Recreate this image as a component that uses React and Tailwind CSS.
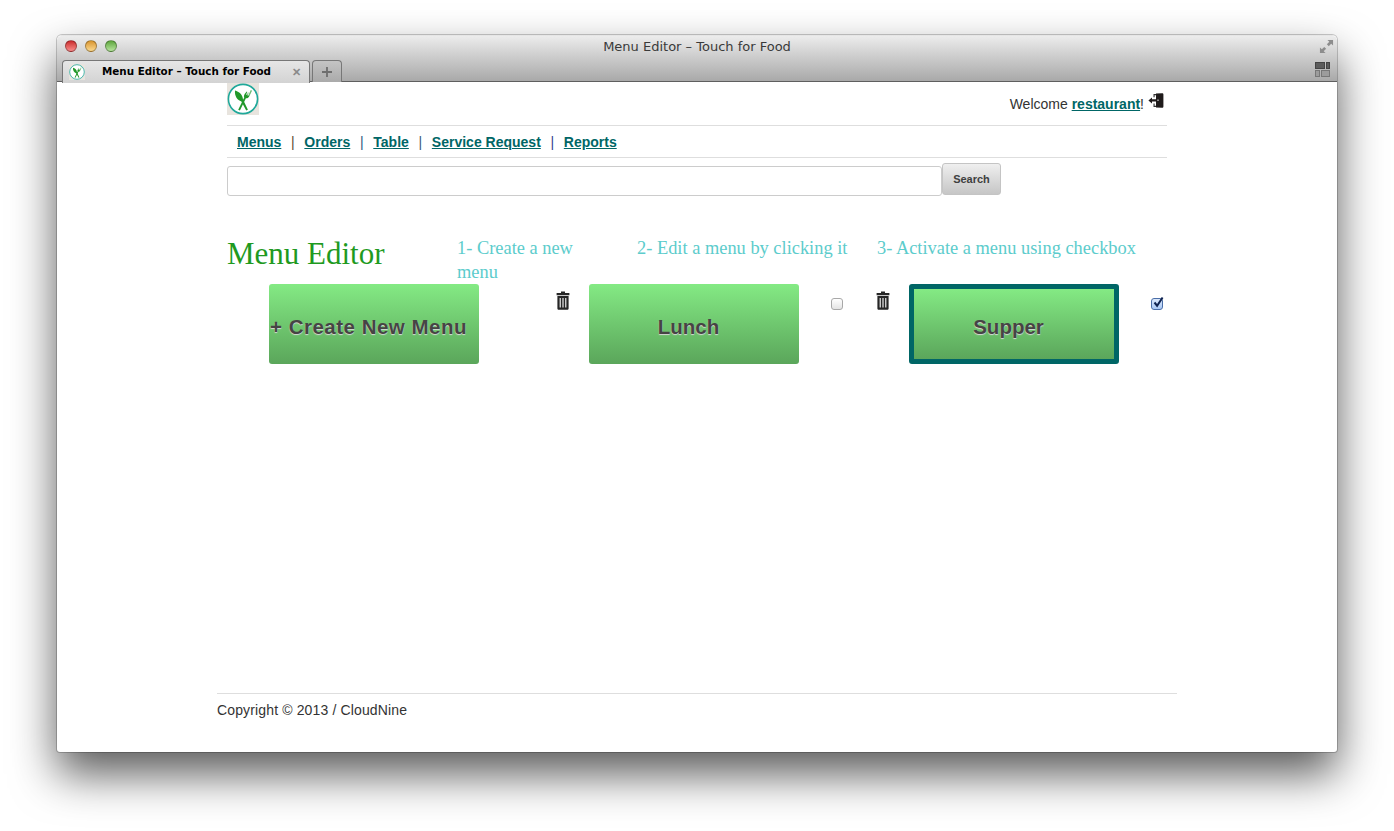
import React from "react";

const sans = { fontFamily: '"Liberation Sans", Arial, sans-serif' };

function Logo({ small }) {
  const s = small ? 16 : 32;
  return (
    <svg width={s} height={s} viewBox="0 0 32 32" className="block shrink-0">
      <rect width="32" height="32" fill="#e8e4de" />
      <circle cx="16" cy="16" r="14.6" fill="#fff" stroke="#1fa89a" strokeWidth="1.6" />
      <path d="M8 7.5 C12 8.5 15.8 11.5 16 16.5 L20.9 26.8 L19.2 27.6 L14.4 18.4 C10.4 17.4 7.4 13 8 7.5Z" fill="#22982a" />
      <path d="M23.8 7 L24.9 7.7 L22.4 13 C21.6 14.8 20.2 15.6 18.9 15.3 L12.9 27.6 L11.2 26.8 L17.2 14.6 C16.5 13.2 17.2 11.8 18 10.6 L19.8 8.6 L20.4 9 L19 11.4 L19.6 11.8 L21.2 9.4 L21.8 9.8 L20.5 12.3 L21.1 12.7Z" fill="#22982a" />
      <path d="M20 8.6 L23.8 7 L24.9 7.7 L22.4 13 L19.8 11.8Z" fill="#ffffff" opacity="0.35" />
    </svg>
  );
}

function Trash() {
  return (
    <svg width="14" height="19" viewBox="0 0 14 19" className="block">
      <path d="M5 0.5h4v1.4h4.4v2.4H0.6V1.9H5z" fill="#262626" />
      <path d="M1.4 5h11.2v12.4c0 .8-.6 1.3-1.3 1.3H2.7c-.7 0-1.3-.5-1.3-1.3z" fill="#262626" />
      <path d="M3.6 7h1.3v9.6H3.6zM6.35 7h1.3v9.6h-1.3zM9.1 7h1.3v9.6H9.1z" fill="#dcdcdc" />
    </svg>
  );
}

function Exit() {
  return (
    <svg width="16" height="15" viewBox="0 0 16 15" className="block">
      <path d="M5.5 1h2.5v1.2H6.6v2H5.5zM5.5 10.6h1.1v2.2H8V14H5.5z" fill="#333" />
      <path d="M8 0.4l6-0.2c1 0 1.4.5 1.4 1.4v11.8c0 .9-.4 1.4-1.4 1.4L8 14.6z" fill="#1f1b1b" />
      <path d="M0.4 7.4L4 4.4v1.9h4.6v2.3H4v1.9z" fill="#1f1b1b" />
      <rect x="9.4" y="6.6" width="1.2" height="1.2" fill="#fff" />
    </svg>
  );
}

function Light({ cls }) {
  return <span className={`block w-3 h-3 rounded-full border border-black/30 ${cls}`} />;
}

function MenuCard({ label, active, wide }) {
  return (
    <button
      className={`w-[210px] h-20 shrink-0 rounded-[3px] bg-gradient-to-b from-[#84ea84] to-[#5ba65b] pr-[11px] pt-[6px] text-[20.5px] font-bold whitespace-nowrap text-[#464444] [text-shadow:0_1px_1px_#d8d8d8] ${
        active ? "border-[5px] border-[#006666]" : ""
      } ${wide ? "tracking-[0.5px]" : ""}`}
      style={sans}
    >
      {label}
    </button>
  );
}

function Check({ on }) {
  return on ? (
    <span className="relative block w-3 h-3 rounded-[3px] border border-[#4a6ea8] bg-gradient-to-b from-[#dbe8fb] to-[#a9c8f5]">
      <svg width="13" height="13" viewBox="0 0 13 13" className="absolute -top-[3px] left-0">
        <path d="M2.5 6.5l2.6 3.2L10.6 1.5" fill="none" stroke="#0f2350" strokeWidth="2" />
      </svg>
    </span>
  ) : (
    <span className="block w-3 h-3 rounded-[3px] border border-[#a8a8a8] bg-gradient-to-b from-white to-[#e4e4e4]" />
  );
}

const Sep = ({ c }) => <span className={`mx-[9.7px] font-normal ${c}`}>|</span>;
const NavLink = ({ children }) => <a className="font-bold underline text-[#006666] cursor-pointer">{children}</a>;

export default function App() {
  return (
    <div className="w-[1394px] h-[831px] overflow-hidden bg-white pl-[57px] pt-[35px]" style={sans}>
      <div className="w-[1280px] h-[717px] flex flex-col bg-white rounded-t-[5px] rounded-b-[3px] shadow-[0_22px_45px_rgba(0,0,0,0.65),0_0_0_1px_rgba(0,0,0,0.2)]">
        {/* Window title bar */}
        <div className="relative h-[47px] shrink-0 rounded-t-[5px] bg-gradient-to-b from-[#ececec] to-[#a9a9a9] border-t border-white/70 border-b border-b-[#5f5f5f]">
          <div className="flex h-[23px] items-start">
            <div className="flex gap-2 pl-2 pt-[4px]">
              <Light cls="bg-gradient-to-b from-[#c9272c] to-[#f98a8a]" />
              <Light cls="bg-gradient-to-b from-[#d8952a] to-[#fbd98c]" />
              <Light cls="bg-gradient-to-b from-[#5da63b] to-[#b7e59d]" />
            </div>
            <div className="flex-1 text-center text-[13px] leading-5 pt-px text-[#3a3a3a] pr-[42px]" style={{ fontFamily: '"DejaVu Sans", sans-serif' }}>
              Menu Editor – Touch for Food
            </div>
            <svg width="15" height="15" viewBox="0 0 16 16" className="mr-[3px] mt-[3px]">
              <path d="M15 1v6l-2-2-2.6 2.6-2-2L11 3 9 1zM1 15V9l2 2 2.6-2.6 2 2L5 13l2 2z" fill="#8d8d8d" />
            </svg>
          </div>
          <div className="flex h-[23px] items-end pl-[5px]">
            <div className="w-[248px] h-[23px] flex items-center rounded-t-[4px] bg-gradient-to-b from-[#e6e6e6] to-[#d3d3d3] border-t border-x border-[#777] -mb-px relative">
              <span className="ml-[6px]"><Logo small /></span>
              <span className="ml-[17px] text-[10.35px] font-semibold text-black flex-1 whitespace-nowrap" style={{ fontFamily: '"DejaVu Sans", sans-serif' }}>
                Menu Editor – Touch for Food
              </span>
              <span className="mr-[8px] text-[11px] font-bold text-[#8a8a8a]">✕</span>
            </div>
            <div className="ml-[2px] w-[30px] h-[22px] flex items-center justify-center rounded-t-[4px] bg-gradient-to-b from-[#c4c4c4] to-[#aaaaaa] border-t border-x border-[#777]">
              <svg width="10" height="10" viewBox="0 0 11 11"><path d="M4.5 0h2v4.5H11v2H6.5V11h-2V6.5H0v-2h4.5z" fill="#6e6e6e" /></svg>
            </div>
            <div className="flex-1" />
            <div className="flex flex-col gap-px mr-[7px] mb-[5px] w-[15px]">
              <div className="flex gap-px">
                <span className="w-[10px] h-[7px] bg-[#5c5c5c] border border-[#444]" />
                <span className="w-[4px] h-[7px] bg-[#5c5c5c] border border-[#444]" />
              </div>
              <div className="flex gap-px">
                <span className="w-[5px] h-[7px] bg-[#9c9c9c] border border-[#777]" />
                <span className="w-[9px] h-[7px] bg-[#9c9c9c] border border-[#777]" />
              </div>
            </div>
          </div>
        </div>

        {/* Page */}
        <div className="flex-1 flex flex-col items-center text-[14px] text-[#333]">
          <main className="w-[940px] flex-1">
            <header className="h-[44px] flex items-start justify-between border-b border-[#dedede] pt-px">
              <Logo />
              <div className="flex items-start pt-[9px] pr-[3px]">
                <span className="pt-[2px] leading-5 mr-px">
                  Welcome <a className="font-bold underline text-[#006666]">restaurant</a>!
                </span>
                <span className="ml-[3px] mt-[1px]"><Exit /></span>
              </div>
            </header>
            <nav className="h-[32px] flex items-center border-b border-[#dedede] pl-[10px] pt-[2px] whitespace-nowrap">
              <NavLink>Menus</NavLink><Sep c="text-[#5a4a30]" />
              <NavLink>Orders</NavLink><Sep c="text-[#2f5a80]" />
              <NavLink>Table</NavLink><Sep c="text-[#405a78]" />
              <NavLink>Service Request</NavLink><Sep c="text-[#3a3f90]" />
              <NavLink>Reports</NavLink>
            </nav>
            <div className="flex items-start pt-[5px]">
              <input className="w-[715px] h-[30px] mt-[3px] rounded-[3px] border border-[#cccccc] bg-white" />
              <button className="w-[59px] h-[32px] rounded-[3px] border border-[#c4c4c4] bg-gradient-to-b from-[#efefef] to-[#c6c6c6] text-[11px] font-bold text-[#404040]">
                Search
              </button>
            </div>
            <section className="flex h-[88px] pt-[38px]" style={{ fontFamily: '"Liberation Serif", Georgia, serif' }}>
              <h1 className="w-[230px] text-[31px] leading-[36px] pt-[2px] text-[#1f9a1f]">Menu Editor</h1>
              <p className="w-[180px] text-[18.4px] leading-6 pt-[2px] pr-[50px] text-[#5ccccc]">1- Create a new menu</p>
              <p className="w-[240px] text-[18.4px] leading-6 pt-[2px] text-[#5ccccc] whitespace-nowrap">2- Edit a menu by clicking it</p>
              <p className="text-[18.4px] leading-6 pt-[2px] text-[#5ccccc] whitespace-nowrap">3- Activate a menu using checkbox</p>
            </section>
            <section className="flex">
              <div className="w-[320px] flex">
                <div className="w-[42px]" />
                <MenuCard label="+ Create New Menu" wide />
              </div>
              <div className="w-[320px] flex">
                <div className="w-[42px] pl-[9px] pt-[7px]"><Trash /></div>
                <MenuCard label="Lunch" />
                <div className="pl-[32px] pt-[14px]"><Check /></div>
              </div>
              <div className="w-[300px] flex">
                <div className="w-[42px] pl-[9px] pt-[7px]"><Trash /></div>
                <MenuCard label="Supper" active />
                <div className="pl-[32px] pt-[14px]"><Check on /></div>
              </div>
            </section>
          </main>
          <footer className="w-[960px] h-[59px] border-t border-[#dedede] pt-[6px] leading-5 tracking-[0.14px]">
            Copyright © 2013 / CloudNine
          </footer>
        </div>
      </div>
    </div>
  );
}
